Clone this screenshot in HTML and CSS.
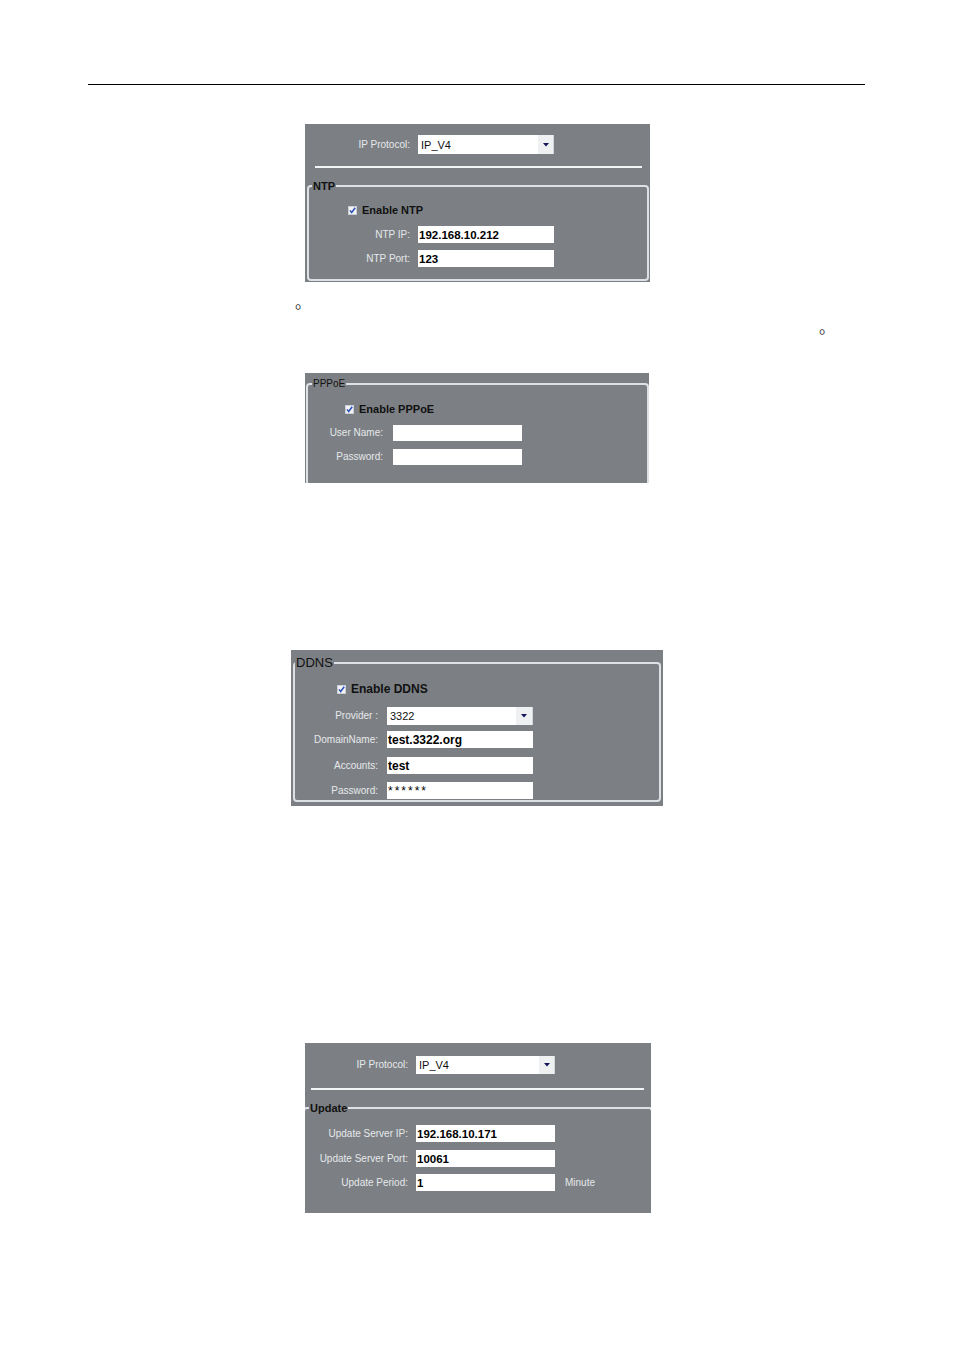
FILE: index.html
```html
<!DOCTYPE html>
<html>
<head>
<meta charset="utf-8">
<title>Network settings</title>
<link rel="stylesheet" href="styles.css">
</head>
<body>
<div class="page">
  <div class="hrule"></div>

  <section class="panel p1">
    <div class="row top">
      <span class="lbl">IP Protocol:</span>
      <span class="select"><span class="sv">IP_V4</span><span class="btn"><svg width="6" height="4" viewBox="0 0 6 4"><path d="M0 0H6L3 3.5Z" fill="#15155a"/></svg></span></span>
    </div>
    <div class="sep"></div>
    <fieldset class="grp">
      <legend>NTP</legend>
      <div class="chk"><svg width="9" height="9" viewBox="0 0 9 9"><rect x="0.5" y="0.5" width="8" height="8" fill="#f2f3f5" stroke="#c9ced4"/><path d="M2 4.4L3.7 6.5L7.2 1.8" fill="none" stroke="#2a4fb5" stroke-width="1.5"/></svg>Enable NTP</div>
      <div class="row r1"><span class="lbl">NTP IP:</span><span class="field">192.168.10.212</span></div>
      <div class="row r2"><span class="lbl">NTP Port:</span><span class="field">123</span></div>
    </fieldset>
  </section>

  <p class="note n1">。</p>
  <p class="note n2">。</p>

  <section class="panel p2">
    <fieldset class="grp">
      <legend>PPPoE</legend>
      <div class="chk"><svg width="9" height="9" viewBox="0 0 9 9"><rect x="0.5" y="0.5" width="8" height="8" fill="#f2f3f5" stroke="#c9ced4"/><path d="M2 4.4L3.7 6.5L7.2 1.8" fill="none" stroke="#2a4fb5" stroke-width="1.5"/></svg>Enable PPPoE</div>
      <div class="row r1"><span class="lbl">User Name:</span><span class="field"></span></div>
      <div class="row r2"><span class="lbl">Password:</span><span class="field"></span></div>
    </fieldset>
  </section>

  <section class="panel p3">
    <fieldset class="grp">
      <legend>DDNS</legend>
      <div class="chk"><svg width="9" height="9" viewBox="0 0 9 9"><rect x="0.5" y="0.5" width="8" height="8" fill="#f2f3f5" stroke="#c9ced4"/><path d="M2 4.4L3.7 6.5L7.2 1.8" fill="none" stroke="#2a4fb5" stroke-width="1.5"/></svg>Enable DDNS</div>
      <div class="row r1"><span class="lbl">Provider :</span><span class="select"><span class="sv">3322</span><span class="btn"><svg width="6" height="4" viewBox="0 0 6 4"><path d="M0 0H6L3 3.5Z" fill="#15155a"/></svg></span></span></div>
      <div class="row r2"><span class="lbl">DomainName:</span><span class="field">test.3322.org</span></div>
      <div class="row r3"><span class="lbl">Accounts:</span><span class="field">test</span></div>
      <div class="row r4"><span class="lbl">Password:</span><span class="field pw">******</span></div>
    </fieldset>
  </section>

  <section class="panel p4">
    <div class="row top">
      <span class="lbl">IP Protocol:</span>
      <span class="select"><span class="sv">IP_V4</span><span class="btn"><svg width="6" height="4" viewBox="0 0 6 4"><path d="M0 0H6L3 3.5Z" fill="#15155a"/></svg></span></span>
    </div>
    <div class="sep"></div>
    <fieldset class="grp">
      <legend>Update</legend>
      <div class="row r1"><span class="lbl">Update Server IP:</span><span class="field">192.168.10.171</span></div>
      <div class="row r2"><span class="lbl">Update Server Port:</span><span class="field">10061</span></div>
      <div class="row r3"><span class="lbl">Update Period:</span><span class="field">1</span><span class="unit">Minute</span></div>
    </fieldset>
  </section>
</div>
</body>
</html>
```
FILE: styles.css
```css
body {
  margin: 0;
  background: #ffffff;
  font-family: "Liberation Sans", Arial, sans-serif;
}

.page {
  width: 954px;
  padding-top: 84px;
}

.hrule {
  margin: 0 0 0 88px;
  width: 777px;
  height: 1px;
  background: #000000;
}

.panel {
  background: #7c8084;
  box-sizing: border-box;
  overflow: hidden;
}

.row {
  display: flex;
  align-items: center;
}

.lbl {
  flex: none;
  text-align: right;
  font-size: 10px;
  line-height: 12px;
  color: #e6e8eb;
  white-space: nowrap;
}

.unit {
  margin-left: 10px;
  font-size: 10px;
  line-height: 12px;
  color: #e6e8eb;
}

.field {
  flex: none;
  display: flex;
  align-items: center;
  box-sizing: border-box;
  padding-left: 1px;
  background: #ffffff;
  font-size: 11.5px;
  font-weight: bold;
  color: #000000;
  white-space: nowrap;
}

.field.pw {
  font-weight: normal;
  font-size: 12px;
  letter-spacing: 2px;
}

.select {
  flex: none;
  display: flex;
  box-sizing: border-box;
  background: #ffffff;
  border-right: 1px solid #d2d5d9;
}

.sv {
  flex: 1;
  display: flex;
  align-items: center;
  padding-left: 3px;
  font-size: 11px;
  color: #111111;
}

.btn {
  flex: none;
  width: 15px;
  display: flex;
  align-items: center;
  justify-content: center;
  background: #eef0f2;
}

.sep {
  height: 2px;
  background: #f3f4f5;
}

.grp {
  margin: 0;
  padding: 0;
  min-inline-size: 0;
  border: 2px solid #dde1e6;
  border-radius: 4px;
}

.grp legend {
  padding: 0 1px;
  color: #111111;
  line-height: 12px;
}

.chk {
  display: flex;
  align-items: center;
  gap: 5px;
  font-weight: bold;
  color: #111111;
  line-height: 12px;
}

.note {
  margin: 0;
  height: 25px;
  font-family: "Noto Sans CJK SC", sans-serif;
  font-size: 16px;
  line-height: 25px;
  color: #333333;
}

.n1 {
  margin-top: 7px;
  padding-left: 295px;
}

.n2 {
  padding-left: 819px;
}

/* Panel 1: IP protocol + NTP */
.p1 {
  margin: 39px 0 0 305px;
  width: 345px;
  height: 158px;
  padding-top: 11px;
}
.p1 .top .lbl { width: 105px; }
.p1 .select { margin-left: 8px; width: 136px; height: 19px; }
.p1 .sep { margin: 12px 8px 0 10px; }
.p1 .grp { margin: 12px 1px 0 2px; padding: 12px 0 12px; }
.p1 .grp legend { margin-left: 3px; font-size: 11px; font-weight: bold; }
.p1 .chk { padding-left: 39px; font-size: 11px; }
.p1 .grp .lbl { width: 101px; }
.p1 .grp .field { margin-left: 8px; width: 136px; height: 17px; }
.p1 .r1 { margin-top: 10px; }
.p1 .r2 { margin-top: 7px; }

/* Panel 2: PPPoE (group box runs past the cropped bottom edge) */
.p2 {
  margin: 34px 0 0 305px;
  width: 344px;
  height: 110px;
  padding-top: 5px;
}
.p2 .grp { margin: 0 0 0 1px; padding: 13px 0 40px; border-bottom: none; border-radius: 4px 4px 0 0; }
.p2 .grp legend { margin-left: 4px; font-size: 10px; }
.p2 .chk { padding-left: 37px; font-size: 11px; }
.p2 .lbl { width: 75px; }
.p2 .field { margin-left: 10px; width: 129px; height: 16px; }
.p2 .r1 { margin-top: 10px; }
.p2 .r2 { margin-top: 8px; }

/* Panel 3: DDNS */
.p3 {
  margin: 167px 0 0 291px;
  width: 372px;
  height: 156px;
  padding-top: 6px;
}
.p3 .grp { margin: 0 2px; padding: 12px 0 1px; }
.p3 .grp legend { margin-left: 0; font-size: 13px; line-height: 14px; }
.p3 .chk { padding-left: 42px; font-size: 12px; line-height: 14px; }
.p3 .lbl { width: 83px; }
.p3 .field, .p3 .select { margin-left: 9px; width: 146px; height: 17px; }
.p3 .field { font-size: 12px; }
.p3 .select { height: 18px; }
.p3 .btn { width: 16px; }
.p3 .r1 { margin-top: 11px; }
.p3 .r2 { margin-top: 6px; }
.p3 .r3 { margin-top: 9px; }
.p3 .r4 { margin-top: 8px; }

/* Panel 4: IP protocol + Update (group box cropped on the sides and bottom) */
.p4 {
  margin: 237px 0 0 305px;
  width: 346px;
  height: 170px;
  padding-top: 13px;
}
.p4 .lbl { width: 103px; }
.p4 .select { margin-left: 8px; width: 139px; height: 18px; }
.p4 .sep { margin: 14px 7px 0 6px; }
.p4 .grp { margin: 12px -2px 0 -2px; padding: 11px 0 40px; border-bottom: none; border-radius: 4px 4px 0 0; }
.p4 .grp legend { margin-left: 4px; font-size: 11px; font-weight: bold; }
.p4 .field { margin-left: 8px; width: 139px; height: 17px; }
.p4 .r2 { margin-top: 8px; }
.p4 .r3 { margin-top: 7px; }
```
